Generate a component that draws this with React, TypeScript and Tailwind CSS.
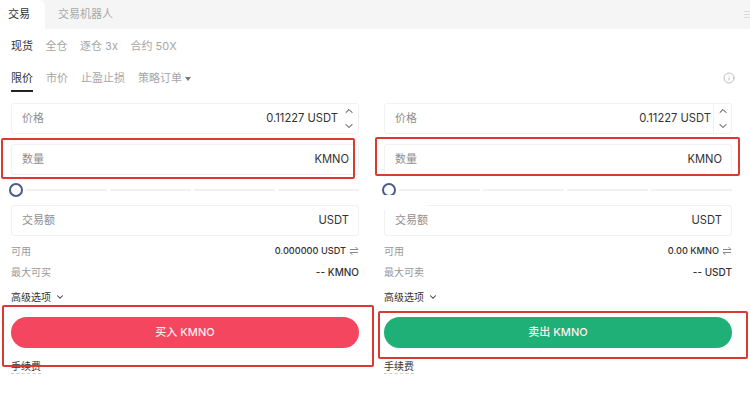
import { ChevronDown, ChevronUp, Info } from "lucide-react";

function Field({
  label,
  value,
  stepper,
  divider,
}: {
  label: string;
  value: string;
  stepper?: boolean;
  divider?: boolean;
}) {
  return (
    <div className="flex items-center justify-between border border-[#f1f1f1] rounded-[3px] pl-[10px] h-[31px]">
      <span className="text-[11px] text-[#8f8f8f]">{label}</span>
      <div className="flex items-center h-full">
        <span className="text-[11.2px] text-[#333]">{value}</span>
        {stepper ? (
          <div
            className={`flex flex-col items-center justify-center gap-[3px] ml-[2px] w-[18px] h-full text-[#333] ${
              divider ? "border-l border-[#f1f1f1]" : ""
            }`}
          >
            <ChevronUp size={12} strokeWidth={2} />
            <ChevronDown size={12} strokeWidth={2} />
          </div>
        ) : (
          <span className="w-[9px]" />
        )}
      </div>
    </div>
  );
}

function Slider() {
  return (
    <div className="h-[30px] flex items-center">
      <div className="w-[14px] h-[14px] rounded-full border-2 border-[#4a5a8c] bg-white ml-[-2px] shrink-0" />
      <div className="flex-1 flex gap-[3px] ml-[3px]">
        <div className="flex-1 h-[2px] bg-[#f1f1f1]" />
        <div className="flex-1 h-[2px] bg-[#f1f1f1]" />
        <div className="flex-1 h-[2px] bg-[#f1f1f1]" />
        <div className="flex-1 h-[2px] bg-[#f1f1f1]" />
      </div>
    </div>
  );
}

function Column({
  avail,
  maxLabel,
  maxValue,
  btn,
  btnCls,
  divider,
}: {
  avail: string;
  maxLabel: string;
  maxValue: string;
  btn: string;
  btnCls: string;
  divider?: boolean;
}) {
  return (
    <div className="w-[348px] flex flex-col">
      <Field label="价格" value="0.11227 USDT" stepper divider={divider} />
      <div className="h-[10px]" />
      <Field label="数量" value="KMNO" />
      <Slider />
      <Field label="交易额" value="USDT" />
      <div className="flex items-center justify-between mt-[7px] h-[16px] text-[10px]">
        <span className="text-[#9a9a9a]">可用</span>
        <span className="flex items-center gap-[3px] text-[9.2px] font-medium text-[#333]">
          {avail}
          <svg width="10" height="10" viewBox="0 0 10 10" fill="none" stroke="#888" strokeWidth="1">
            <path d="M1 3.5H9L6.5 1" />
            <path d="M9 6.5H1L3.5 9" />
          </svg>
        </span>
      </div>
      <div className="flex items-center justify-between mt-[5px] h-[16px] text-[10px]">
        <span className="text-[#9a9a9a]">{maxLabel}</span>
        <span className="font-medium text-[#333]">{maxValue}</span>
      </div>
      <div className="flex items-center gap-[4px] mt-[9px] h-[16px] text-[10px] text-[#333]">
        高级选项
        <ChevronDown size={10} strokeWidth={2.5} />
      </div>
      <div
        className={`mt-[12px] h-[31px] rounded-full flex items-center justify-center text-[11px] font-medium text-[#fdeef0] ${btnCls}`}
      >
        {btn}
      </div>
      <div className="mt-[11px] self-start text-[10px] leading-[14px] text-[#333] border-b border-dashed border-[#ccc]">
        手续费
      </div>
    </div>
  );
}

export default function App() {
  return (
    <div className="relative w-[750px] h-[414px] overflow-hidden bg-white font-['Inter','Noto_Sans_CJK_SC',sans-serif]">
      <div className="h-[29px] bg-[#f5f5f5] flex items-center text-[11px]">
        <div className="w-[45px] h-full bg-white flex items-center pl-[8px] text-[#333] rounded-tr-[6px]">交易</div>
        <div className="pl-[13px] text-[#a8a8a8]">交易机器人</div>
        <div className="ml-auto flex flex-col gap-[2px] w-[6px]">
          <div className="h-px bg-[#dcdcdc]" />
          <div className="h-px bg-[#dcdcdc]" />
          <div className="h-px bg-[#dcdcdc]" />
        </div>
      </div>

      <div className="flex items-center gap-[12.5px] pl-[11px] h-[34px] text-[11px] text-[#a6a6a6]">
        <span className="text-[#333]">现货</span>
        <span>全仓</span>
        <span>逐仓 3x</span>
        <span>合约 50X</span>
      </div>

      <div className="flex items-start justify-between pl-[11px] pr-[15px] h-[40px] pt-[7px] text-[11px] text-[#a6a6a6]">
        <div className="flex items-start gap-[13px]">
          <span className="text-[#333] h-[22px] border-b-2 border-[#222]">限价</span>
          <span>市价</span>
          <span>止盈止损</span>
          <span className="flex items-center gap-[3px] h-[17px]">
            策略订单
            <span className="w-0 h-0 border-x-[3px] border-x-transparent border-t-[4px] border-t-[#777]" />
          </span>
        </div>
        <Info size={12} className="text-[#aaa] mt-[2px]" strokeWidth={1.5} />
      </div>

      <div className="flex gap-[25px] pl-[11px]">
        <Column
          avail="0.000000 USDT"
          maxLabel="最大可买"
          maxValue="-- KMNO"
          btn="买入 KMNO"
          btnCls="bg-[#f4475f]"
        />
        <Column
          avail="0.00 KMNO"
          maxLabel="最大可卖"
          maxValue="-- USDT"
          btn="卖出 KMNO"
          btnCls="bg-[#1fb077]"
          divider
        />
      </div>

      <div className="absolute left-[382px] top-[195px] w-[44px] h-[15px] bg-white" />

      <div className="absolute left-[1px] top-[138px] w-[354px] h-[41px] border-2 border-[#d93a32] rounded-[2px]" />
      <div className="absolute left-[375px] top-[137px] w-[365px] h-[39px] border-2 border-[#d93a32] rounded-[2px]" />
      <div className="absolute left-[2px] top-[305px] w-[372px] h-[62px] border-2 border-[#d93a32] rounded-[2px]" />
      <div className="absolute left-[378px] top-[311px] w-[370px] h-[48px] border-2 border-[#d93a32] rounded-[2px]" />
    </div>
  );
}
